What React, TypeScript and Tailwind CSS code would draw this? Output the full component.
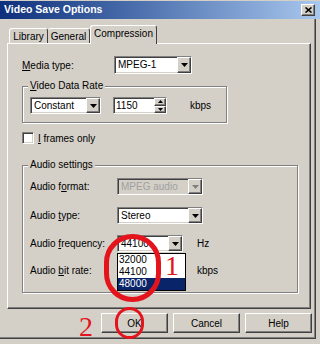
import type { ReactNode } from "react";

// classic 3D edges
const sunken =
  "border border-t-[#808080] border-l-[#808080] border-r-white border-b-white shadow-[inset_1px_1px_0_#404040,inset_-1px_-1px_0_#d4d0c8]";
const raised =
  "border border-t-white border-l-white border-r-[#404040] border-b-[#404040] shadow-[inset_-1px_-1px_0_#808080]";

function Arrow({ disabled = false }: { disabled?: boolean }) {
  return (
    <svg width="7" height="4" viewBox="0 0 7 4">
      <path d="M0 0h7L3.5 4z" fill={disabled ? "#808080" : "#000"} />
    </svg>
  );
}

function Select({ value, className = "", disabled = false }: { value: string; className?: string; disabled?: boolean }) {
  return (
    <div className={`flex h-[17px] items-stretch ${sunken} ${disabled ? "bg-[#d4d0c8]" : "bg-white"} ${className}`}>
      <span className={`flex-1 pl-[3px] leading-[15px] ${disabled ? "text-[#a0a0a0]" : "text-black"}`}>{value}</span>
      <div className={`flex w-[14px] items-center justify-center bg-[#d4d0c8] ${raised}`}>
        <Arrow disabled={disabled} />
      </div>
    </div>
  );
}

function Group({ label, className = "", children }: { label: ReactNode; className?: string; children: ReactNode }) {
  return (
    <div className={`relative border border-[#808080] shadow-[1px_1px_0_#fff,inset_1px_1px_0_#fff] ${className}`}>
      <span className="absolute -top-[7px] left-[5px] bg-[#d4d0c8] px-[2px] leading-[12px]">{label}</span>
      {children}
    </div>
  );
}

function Button({ children }: { children: ReactNode }) {
  return (
    <div className={`flex h-[20px] w-[67px] items-center justify-center bg-[#d4d0c8] ${raised}`}>
      {children}
    </div>
  );
}

export default function App() {
  return (
    <div className="relative flex h-[344px] w-[320px] flex-col overflow-hidden bg-[#d4d0c8] text-[10px] text-black font-['Liberation_Sans',Arial,sans-serif]">
      {/* Title bar */}
      <div className="mt-px flex h-[18px] shrink-0 items-center justify-between bg-linear-to-r from-[#0e2f7c] to-[#a9c8ee] pl-[4px] pr-[5px]">
        <span className="text-[10.5px] font-bold text-white">Video Save Options</span>
        <div className={`flex h-[12px] w-[14px] items-center justify-center bg-[#d4d0c8] ${raised}`}>
          <svg width="7" height="6" viewBox="0 0 7 6">
            <path d="M0.5 0.5l6 5M6.5 0.5l-6 5" stroke="#000" strokeWidth="1.6" />
          </svg>
        </div>
      </div>

      {/* Window body */}
      <div className="flex h-[320px] w-[316px] shrink-0 flex-col border-r border-b border-r-[#404040] border-b-[#404040] shadow-[inset_-1px_-1px_0_#808080]">
        {/* Tabs */}
        <div className="mt-[6px] flex items-end pl-[9px]">
          <div className="flex h-[15px] w-[39px] items-center justify-center rounded-t-[3px] border-t border-l border-r border-t-white border-l-white border-r-[#404040]">
            Library
          </div>
          <div className="flex h-[15px] w-[42px] items-center justify-center rounded-t-[3px] border-t border-r border-t-white border-r-[#404040]">
            General
          </div>
          <div className="relative z-10 -mb-px flex h-[19px] w-[67px] items-center justify-center rounded-t-[3px] border-t border-l border-r border-t-white border-l-white border-r-[#404040] bg-[#d4d0c8] pb-[3px]">
            Compression
          </div>
        </div>

        {/* Tab panel */}
        <div className="ml-[7px] flex h-[266px] w-[304px] flex-col border border-t-white border-l-white border-r-[#404040] border-b-[#404040] pl-[14px] shadow-[inset_-1px_-1px_0_#808080]">
          <div className="mt-[12px] flex h-[18px] items-center">
            <span className="w-[92px]">
              <u>M</u>edia type:
            </span>
            <Select value="MPEG-1" className="h-[18px] w-[78px]" />
          </div>

          <Group
            label={
              <>
                <u>V</u>ideo Data Rate
              </>
            }
            className="mt-[12px] flex h-[37px] w-[205px] items-start pt-[10px] pl-[7px]"
          >
            <Select value="Constant" className="w-[71px]" />
            <div className={`ml-[12px] flex h-[17px] w-[54px] bg-white ${sunken}`}>
              <span className="flex-1 pl-[2px] leading-[15px]">1150</span>
              <div className="flex w-[12px] flex-col">
                <div className={`flex flex-1 items-center justify-center bg-[#d4d0c8] ${raised}`}>
                  <svg width="5" height="3" viewBox="0 0 5 3">
                    <path d="M0 3h5L2.5 0z" fill="#000" />
                  </svg>
                </div>
                <div className={`flex flex-1 items-center justify-center bg-[#d4d0c8] ${raised}`}>
                  <svg width="5" height="3" viewBox="0 0 5 3">
                    <path d="M0 0h5L2.5 3z" fill="#000" />
                  </svg>
                </div>
              </div>
            </div>
            <span className="ml-[23px] leading-[17px]">kbps</span>
          </Group>

          <div className="mt-[9px] flex h-[12px] items-center">
            <div className={`h-[12px] w-[12px] bg-white ${sunken}`} />
            <span className="ml-[4px]">
              <u>I</u> frames only
            </span>
          </div>

          <Group label="Audio settings" className="mt-[21px] flex h-[128px] w-[276px] flex-col pt-[12px] pl-[7px]">
            <div className="flex h-[17px] items-center">
              <span className="w-[87px]">
                Audio f<u>o</u>rmat:
              </span>
              <Select value="MPEG audio" className="w-[86px]" disabled />
            </div>
            <div className="mt-[12px] flex h-[17px] items-center">
              <span className="w-[87px]">
                Audio <u>t</u>ype:
              </span>
              <Select value="Stereo" className="w-[86px]" />
            </div>
            <div className="mt-[11px] flex h-[17px] items-center">
              <span className="w-[87px]">
                Audio <u>f</u>requency:
              </span>
              <div className="relative">
                <Select value="44100" className="w-[66px]" />
                <div className="absolute top-[18px] left-0 z-20 flex w-[69px] flex-col border border-black bg-white">
                  <span className="h-[12px] pl-[1px] leading-[12px]">32000</span>
                  <span className="h-[12px] pl-[1px] leading-[12px]">44100</span>
                  <span className="h-[12px] bg-[#0a246a] pl-[1px] leading-[12px] text-white">48000</span>
                </div>
              </div>
              <span className="ml-[14px]">Hz</span>
            </div>
            <div className="mt-[10px] flex h-[17px] items-center">
              <span className="w-[87px]">
                Audio <u>b</u>it rate:
              </span>
              {/* bit rate combo sits under the open list */}
              <div className="h-[17px] w-[66px]" />
              <span className="ml-[14px]">kbps</span>
            </div>
          </Group>
        </div>

        {/* Buttons */}
        <div className="mt-[4px] ml-[101px] flex gap-[5px]">
          <Button>OK</Button>
          <Button>Cancel</Button>
          <Button>Help</Button>
        </div>
      </div>

      {/* Red annotations */}
      <div className="absolute top-[234px] left-[104px] z-30 h-[68px] w-[57px] rounded-full border-[5px] border-[#e3141c]" />
      <span className="absolute top-[252px] left-[165px] z-30 text-[28px] leading-none text-[#e3141c] font-['Liberation_Serif','Times_New_Roman',serif]">
        1
      </span>
      <div className="absolute top-[307px] left-[115px] z-30 h-[32px] w-[29px] rounded-full border-[3px] border-[#e3141c]" />
      <span className="absolute top-[313px] left-[79px] z-30 text-[28px] leading-none text-[#e3141c] font-['Liberation_Serif','Times_New_Roman',serif]">
        2
      </span>
    </div>
  );
}
